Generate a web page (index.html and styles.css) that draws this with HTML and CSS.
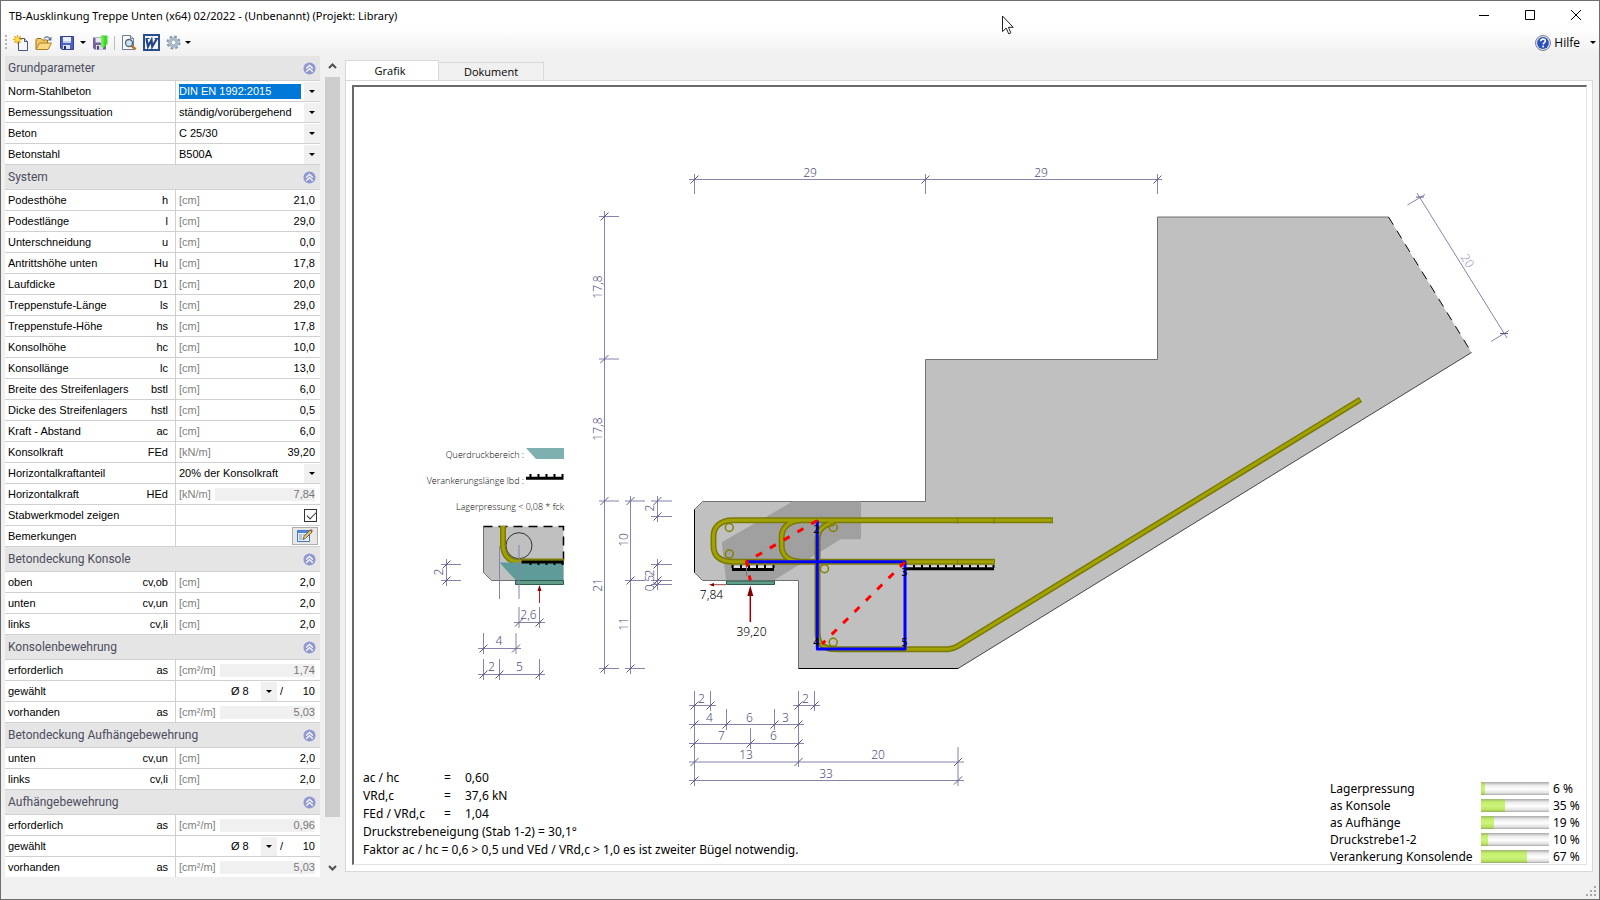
FILE: index.html
```
<!DOCTYPE html>
<html lang="de">
<head>
  <meta charset="UTF-8" />
  <meta name="viewport" content="width=device-width, initial-scale=1.0" />
  <title>TB-Ausklinkung Treppe Unten</title>
  <link rel="stylesheet" href="styles.css">
</head>
<body>
  <header class="titlebar">
    <h1>TB-Ausklinkung Treppe Unten (x64) 02/2022 - (Unbenannt) (Projekt: Library)</h1>
    <div class="window-buttons">
      <button type="button" aria-label="Minimieren"><svg width="12" height="12" viewBox="0 0 12 12"><path d="M1 6.5h10" /></svg></button>
      <button type="button" aria-label="Maximieren"><svg width="12" height="12" viewBox="0 0 12 12"><path d="M1.5 1.5h9v9h-9z" /></svg></button>
      <button type="button" aria-label="Schließen"><svg width="12" height="12" viewBox="0 0 12 12"><path d="M1 1l10 10M11 1L1 11" /></svg></button>
    </div>
    <svg class="pointer" width="13" height="20" viewBox="0 0 13 20"><path d="M1.5 1v15.5l3.7-3.4 2.5 5.7 2.2-1-2.5-5.5h4.800z" fill="#fff" stroke="#222" /></svg>
  </header>

  <nav class="toolbar">
    <span class="grip"></span>
    <button type="button" class="tool" aria-label="Neu">
      <svg width="16" height="16" viewBox="0 0 16 16"><path d="M5.500 3.500h6l3 3v9h-9z" fill="#f6f8fc" stroke="#44567a" /><path d="M11.500 3.500v3h3" fill="#cdd7e8" stroke="#44567a" /><path d="M4.500 0v9M0 4.500h9M1.300 1.300l6.400 6.400M7.700 1.300L1.300 7.700" stroke="#f2a413" stroke-width="1.300" /><circle cx="4.500" cy="4.500" r="2" fill="#ffe34d" /></svg>
    </button>
    <button type="button" class="tool" aria-label="Öffnen">
      <svg width="17" height="16" viewBox="0 0 17 16"><path d="M1 14V4.500l1-1h4l1.500 1.500h5v3" fill="#f3c768" stroke="#9a7020" /><path d="M1 14.500l3.500-6.500h12l-3.500 6.500z" fill="#fbd984" stroke="#b07f22" /><path d="M9 3.500c2-2.500 4.500-2 6 .5" fill="none" stroke="#5d7290" stroke-width="1.200" /><path d="M16.500 1.500v4h-4z" fill="#5d7290" /></svg>
    </button>
    <button type="button" class="tool" aria-label="Speichern">
      <svg width="16" height="16" viewBox="0 0 16 16"><path d="M1.500 1.500h13v13h-11.500l-1.500-1.500z" fill="#4f5fc4" stroke="#333d96" /><path d="M4 2h8v6H4z" fill="#eef2fb" /><path d="M4 6h8v2H4z" fill="#bccdf0" /><path d="M4 10h7v4H4z" fill="#dbe2f2" /><path d="M5 11h2v3H5z" fill="#222a60" /></svg>
    </button>
    <button type="button" class="drop" aria-label="Speicheroptionen"><i class="caret"></i></button>
    <button type="button" class="tool" aria-label="Speichern und schließen">
      <svg width="16" height="16" viewBox="0 0 16 16"><path d="M1 2.500h13v12H2.500L1 13z" fill="#75649f" /><path d="M3.500 3h6v4.500h-6z" fill="#e8e6f2" /><path d="M4 10h7v4.500H4z" fill="#dedbea" /><path d="M5 11h2v3.500H5z" fill="#4c3d76" /><path d="M9 .5h6.500V9L11 13 9 11z" fill="#3ddb2b" /><path d="M9 .5l2.500 1.500v11L9 11z" fill="#76ef52" /></svg>
    </button>
    <span class="separator"></span>
    <button type="button" class="tool" aria-label="Vorschau">
      <svg width="16" height="16" viewBox="0 0 16 16"><path d="M1.500 .5h8l3 3v11h-11z" fill="#f7f9fc" stroke="#6d7d98" /><path d="M9.500 .5v3h3" fill="#dbe3ef" stroke="#6d7d98" /><path d="M10.500 10.500l4 4" stroke="#b3782c" stroke-width="2.500" /><circle cx="8" cy="8" r="3.500" fill="#cfe4f6" stroke="#52637c" stroke-width="1.300" /></svg>
    </button>
    <button type="button" class="tool" aria-label="Word">
      <svg width="17" height="17" viewBox="0 0 17 17"><path d="M1 1h15v15H1z" fill="#f2f6fc" stroke="#2b4c8c" stroke-width="2" /><path d="M3.500 5l1.500 7.500L8.500 6l.7 6.500L14 4.500" fill="none" stroke="#234688" stroke-width="2.200" /><path d="M2.500 4.500h4M11.500 4.500H15" stroke="#234688" stroke-width="1.200" /></svg>
    </button>
    <button type="button" class="tool narrow" aria-label="Einstellungen">
      <svg width="15" height="15" viewBox="0 0 15 15"><circle cx="7.500" cy="7.500" r="5.800" fill="none" stroke="#8797a8" stroke-width="2.400" stroke-dasharray="2.600 1.955" /><circle cx="7.500" cy="7.500" r="4" fill="#f3f6f9" stroke="#a9bacb" stroke-width="2.600" /><circle cx="7.500" cy="7.500" r="2.400" fill="#fff" stroke="#8292a4" stroke-width=".8" /></svg>
    </button>
    <button type="button" class="drop" aria-label="Einstellungsoptionen"><i class="caret"></i></button>
    <button type="button" class="help">
      <svg width="16" height="16" viewBox="0 0 16 16"><circle cx="8" cy="8" r="7.500" fill="#dfe3ea" stroke="#7c818a" /><circle cx="8" cy="8" r="5.900" fill="#2b50bd" /><path d="M5.700 6.300c.1-3 4.800-2.800 4.700-.2 0 1.500-2.200 1.500-2.300 3.300" fill="none" stroke="#fff" stroke-width="1.600" /><circle cx="8.100" cy="11.600" r="1" fill="#fff" /></svg>
      Hilfe <i class="caret"></i>
    </button>
  </nav>

  <svg class="defs" width="0" height="0">
    <symbol id="fold" viewBox="0 0 14 14"><circle cx="7" cy="7" r="6.500" fill="#8f98d0" /><path d="M3.500 7L7 3.500 10.500 7M3.500 10.500L7 7l3.500 3.500" fill="none" stroke="#fff" stroke-width="1.300" /></symbol>
  </svg>

  <main>
    <form class="params">
      <section>
        <h2>Grundparameter <button type="button" class="fold" aria-label="Einklappen"><svg><use href="#fold" /></svg></button></h2>
        <div class="row"><label for="norm">Norm-Stahlbeton</label><div class="value combo"><select id="norm" class="selected"><option>DIN EN 1992:2015</option></select><i class="arrow"></i></div></div>
        <div class="row"><label for="situation">Bemessungssituation</label><div class="value combo"><select id="situation"><option>ständig/vorübergehend</option></select><i class="arrow"></i></div></div>
        <div class="row"><label for="beton">Beton</label><div class="value combo"><select id="beton"><option>C 25/30</option></select><i class="arrow"></i></div></div>
        <div class="row"><label for="stahl">Betonstahl</label><div class="value combo"><select id="stahl"><option>B500A</option></select><i class="arrow"></i></div></div>
      </section>

      <section>
        <h2>System <button type="button" class="fold" aria-label="Einklappen"><svg><use href="#fold" /></svg></button></h2>
        <div class="row"><label for="h">Podesthöhe <span>h</span></label><div class="value"><span class="unit">[cm]</span><input id="h" type="text" value="21,0"></div></div>
        <div class="row"><label for="l">Podestlänge <span>l</span></label><div class="value"><span class="unit">[cm]</span><input id="l" type="text" value="29,0"></div></div>
        <div class="row"><label for="u">Unterschneidung <span>u</span></label><div class="value"><span class="unit">[cm]</span><input id="u" type="text" value="0,0"></div></div>
        <div class="row"><label for="hu">Antrittshöhe unten <span>Hu</span></label><div class="value"><span class="unit">[cm]</span><input id="hu" type="text" value="17,8"></div></div>
        <div class="row"><label for="d1">Laufdicke <span>D1</span></label><div class="value"><span class="unit">[cm]</span><input id="d1" type="text" value="20,0"></div></div>
        <div class="row"><label for="ls">Treppenstufe-Länge <span>ls</span></label><div class="value"><span class="unit">[cm]</span><input id="ls" type="text" value="29,0"></div></div>
        <div class="row"><label for="hs">Treppenstufe-Höhe <span>hs</span></label><div class="value"><span class="unit">[cm]</span><input id="hs" type="text" value="17,8"></div></div>
        <div class="row"><label for="hc">Konsolhöhe <span>hc</span></label><div class="value"><span class="unit">[cm]</span><input id="hc" type="text" value="10,0"></div></div>
        <div class="row"><label for="lc">Konsollänge <span>lc</span></label><div class="value"><span class="unit">[cm]</span><input id="lc" type="text" value="13,0"></div></div>
        <div class="row"><label for="bstl">Breite des Streifenlagers <span>bstl</span></label><div class="value"><span class="unit">[cm]</span><input id="bstl" type="text" value="6,0"></div></div>
        <div class="row"><label for="hstl">Dicke des Streifenlagers <span>hstl</span></label><div class="value"><span class="unit">[cm]</span><input id="hstl" type="text" value="0,5"></div></div>
        <div class="row"><label for="ac">Kraft - Abstand <span>ac</span></label><div class="value"><span class="unit">[cm]</span><input id="ac" type="text" value="6,0"></div></div>
        <div class="row"><label for="fed">Konsolkraft <span>FEd</span></label><div class="value"><span class="unit">[kN/m]</span><input id="fed" type="text" value="39,20"></div></div>
        <div class="row"><label for="hanteil">Horizontalkraftanteil</label><div class="value combo"><select id="hanteil"><option>20% der Konsolkraft</option></select><i class="arrow"></i></div></div>
        <div class="row"><label for="hed">Horizontalkraft <span>HEd</span></label><div class="value"><span class="unit">[kN/m]</span><input id="hed" type="text" value="7,84" readonly></div></div>
        <div class="row"><label for="stabwerk">Stabwerkmodel zeigen</label><div class="value end"><input id="stabwerk" type="checkbox" checked></div></div>
        <div class="row"><label for="bemerkungen">Bemerkungen</label><div class="value end">
          <button type="button" id="bemerkungen" class="note" aria-label="Bemerkungen">
            <svg width="16" height="14" viewBox="0 0 16 14"><path d="M.5 1.500h12v11H.5z" fill="#e9f0fb" stroke="#4a72b8" /><path d="M.5 1.500h12V4H.5z" fill="#4f86d8" /><path d="M2 6h3M2 8h3M2 10h3M6 6h4" stroke="#7b98c9" /><path d="M6 10.500l1-3L13 1l2 2-6.500 6.500z" fill="#e8c66a" stroke="#54452a" stroke-width=".8" /><path d="M13 1l1-1 2 2-1 1z" fill="#c9433a" /></svg>
          </button></div></div>
      </section>

      <section>
        <h2>Betondeckung Konsole <button type="button" class="fold" aria-label="Einklappen"><svg><use href="#fold" /></svg></button></h2>
        <div class="row"><label for="cvob">oben <span>cv,ob</span></label><div class="value"><span class="unit">[cm]</span><input id="cvob" type="text" value="2,0"></div></div>
        <div class="row"><label for="cvun">unten <span>cv,un</span></label><div class="value"><span class="unit">[cm]</span><input id="cvun" type="text" value="2,0"></div></div>
        <div class="row"><label for="cvli">links <span>cv,li</span></label><div class="value"><span class="unit">[cm]</span><input id="cvli" type="text" value="2,0"></div></div>
      </section>

      <section>
        <h2>Konsolenbewehrung <button type="button" class="fold" aria-label="Einklappen"><svg><use href="#fold" /></svg></button></h2>
        <div class="row"><label for="kas1">erforderlich <span>as</span></label><div class="value"><span class="unit">[cm²/m]</span><input id="kas1" type="text" value="1,74" readonly></div></div>
        <div class="row"><label for="kdm">gewählt</label><div class="value combo bars"><select id="kdm"><option>Ø 8</option></select><i class="arrow"></i><span>/</span><input type="text" aria-label="Abstand" value="10"></div></div>
        <div class="row"><label for="kas2">vorhanden <span>as</span></label><div class="value"><span class="unit">[cm²/m]</span><input id="kas2" type="text" value="5,03" readonly></div></div>
      </section>

      <section>
        <h2>Betondeckung Aufhängebewehrung <button type="button" class="fold" aria-label="Einklappen"><svg><use href="#fold" /></svg></button></h2>
        <div class="row"><label for="acvun">unten <span>cv,un</span></label><div class="value"><span class="unit">[cm]</span><input id="acvun" type="text" value="2,0"></div></div>
        <div class="row"><label for="acvli">links <span>cv,li</span></label><div class="value"><span class="unit">[cm]</span><input id="acvli" type="text" value="2,0"></div></div>
      </section>

      <section>
        <h2>Aufhängebewehrung <button type="button" class="fold" aria-label="Einklappen"><svg><use href="#fold" /></svg></button></h2>
        <div class="row"><label for="aas1">erforderlich <span>as</span></label><div class="value"><span class="unit">[cm²/m]</span><input id="aas1" type="text" value="0,96" readonly></div></div>
        <div class="row"><label for="adm">gewählt</label><div class="value combo bars"><select id="adm"><option>Ø 8</option></select><i class="arrow"></i><span>/</span><input type="text" aria-label="Abstand" value="10"></div></div>
        <div class="row"><label for="aas2">vorhanden <span>as</span></label><div class="value"><span class="unit">[cm²/m]</span><input id="aas2" type="text" value="5,03" readonly></div></div>
      </section>
    </form>

    <div class="scrollbar">
      <button type="button" class="up" aria-label="Nach oben"><svg width="9" height="6" viewBox="0 0 9 6"><path d="M1 5l3.500-3.500L8 5" /></svg></button>
      <div class="track"><div class="thumb"></div></div>
      <button type="button" aria-label="Nach unten"><svg width="9" height="6" viewBox="0 0 9 6"><path d="M1 1l3.500 3.500L8 1" /></svg></button>
    </div>

    <div class="view">
      <div class="tabs" role="tablist">
        <button type="button" role="tab" class="active" aria-selected="true">Grafik</button>
        <button type="button" role="tab" aria-selected="false">Dokument</button>
      </div>
      <div class="page">
        <div class="canvas">
          <svg class="drawing" viewBox="354 87 1232 777">
            <defs>
              <path id="t" d="M-4 4L4-4" />
            </defs>

            <!-- Beton -->
            <path class="concrete" d="M702.500 501.500H925.500V359.500H1157.500V217H1388.500L1471.500 352.500 958 668.500H798.500V580.500H702.500L694.500 572.500V509.500Z" />
            <path class="outline" d="M1388.500 217H1157.500V359.500H925.500V501.500H702.500L694.500 509.500V572.500L702.500 580.500H798.500V668.500" />
            <path class="edge" d="M694.500 509.500V572.500M798.500 668.500H958" />
            <path class="edge thin" d="M958 668.500L1471.500 352.500" />
            <path class="cut" d="M1388.500 217L1471.500 352.500" />

            <!-- Druckbereich -->
            <path class="strut-area" d="M721.700 542.300L792.700 501.500H861V539.300H840.700L773.500 580.500H726Z" />

            <!-- Bewehrung -->
            <g class="bar-edge">
              <path d="M1053 520.200H733C719 520.200 713.500 528 713.500 536V546C713.500 555 719 561.700 733 561.700H995" />
              <path d="M800 520.200C788 521 781.700 529 781.700 536V546C781.700 554 787 561 800 561.700" />
              <path d="M834 523C824 524 817.500 530 817.500 540V632C817.500 643 822 649.200 836 649.200H948Q954 648.500 958 646L1360.500 399.500" />
            </g>
            <g class="bar">
              <path d="M1052 520.200H733C719 520.200 713.500 528 713.500 536V546C713.500 555 719 561.700 733 561.700H994" />
              <path d="M800 520.200C788 521 781.700 529 781.700 536V546C781.700 554 787 561 800 561.700" />
              <path d="M834 523C824 524 817.500 530 817.500 540V632C817.500 643 822 649.200 836 649.200H948Q954 648.500 958 646L1359.500 400" />
            </g>
            <path class="bar-joint" d="M957.500 517.500v6M994 517.500v6M957.500 559v6" />
            <g class="bar-dot">
              <circle cx="729.300" cy="527.500" r="4" /><circle cx="729.300" cy="554" r="4" /><circle cx="833.200" cy="527.500" r="4" /><circle cx="824.500" cy="568.700" r="4" /><circle cx="833.200" cy="642.300" r="4" />
            </g>

            <!-- Verankerung -->
            <path class="gap" d="M734 567H774M905 567H994" />
            <path class="comb" d="M732 569.500H774M905 568.700H994" />
            <path class="teeth" d="M732.500 568v-3M741 568v-3M749 568v-3M757 568v-3M765 568v-3M773.500 568v-3M914 568v-3M922 568v-3M930 568v-3M938 568v-3M946 568v-3M954 568v-3M962 568v-3M970 568v-3M978 568v-3M986 568v-3M993.500 568v-3" />
            <path d="M746.500 565v11" stroke="#777" />

            <path class="plate" d="M726.500 581H774.500V584.500H726.500Z" />

            <!-- Stabwerk -->
            <path class="tie" d="M746.500 561.700H905V649H817.300V520.500M905 561.700" />
            <path class="strut" d="M817.300 520.500L746.500 561.700L750.300 580.500M905 562L822 644" />
            <g class="node">
              <text x="816.500" y="533">2</text><text x="904.500" y="576">3</text><text x="816.500" y="646">4</text><text x="904.500" y="646">5</text>
            </g>

            <!-- Lasten -->
            <path d="M750.300 622V594" stroke="#a00000" stroke-width="1.500" />
            <path d="M750.300 585.500l3 10.500h-6z" fill="#800000" />
            <path d="M726 584.700H712" stroke="#a04040" />
            <path d="M709 584.700l5-1.700v3.400z" fill="#800000" />
            <text class="force" x="711.500" y="599">7,84</text>
            <text class="force" x="751.500" y="636">39,20</text>

            <!-- Legende und Detail Auflager -->
            <g class="legend">
              <text x="524" y="458">Querdruckbereich :</text>
              <text x="524" y="484">Verankerungslänge lbd :</text>
              <text x="564" y="510">Lagerpressung &lt; 0,08 * fck</text>
            </g>
            <path d="M526 448H564V459H536Z" fill="#7fb0b0" />
            <path class="comb" d="M526 478.200H563.500" />
            <path class="teeth" d="M530.500 477v-3M538.500 477v-3M546.500 477v-3M554.500 477v-3M562.500 477v-3" />

            <path class="concrete" d="M483.500 526.500H563.500V580.500H491.500L483.500 572.500Z" />
            <path class="outline" d="M483.500 526.500V572.500L491.500 580.500H516" />
            <path class="cut-heavy" d="M483.500 526.500H563.500V562" />
            <circle cx="519" cy="545.700" r="13" fill="none" stroke="#333" />
            <path class="bar-edge" d="M503 526V544C503 555 509 561.500 518 561.500H564" />
            <path class="bar" d="M503 526V544C503 555 509 561.500 518 561.500H563" />
            <path d="M499.500 562.500H563.500V581H516.500Z" fill="#5f9c99" />
            <path class="comb" d="M521.500 562H563.500" />
            <path class="teeth" d="M530.500 562v3M538.500 562v3M546.500 562v3M554.500 562v3M562.500 562v3" />
            <path class="plate" d="M515.500 580.500H563.500V584.500H515.500Z" />
            <path d="M539.500 603V590" stroke="#b02020" />
            <path d="M539.500 585l2 6h-4z" fill="#800000" />

            <!-- Maßlinien -->
            <g class="dim">
              <path d="M499.500 546V599M519 545V599" />
              <path d="M519 607V628M539.500 607V628M514 622.500H545" />
              <path d="M483.500 633V654M516 633V654M478 648.500H521" />
              <path d="M483.500 659V680M499.500 659V680M539.500 659V680M478 674.500H545" />
              <path d="M446.500 559V586M441 564.500H461M441 580.500H461" />
              <path d="M604.500 211V674M599 216.500H619M599 359H619M599 501H619M599 668.500H619" />
              <path d="M630.500 496V674M625 501H645M625 580.500H645M625 668.500H645" />
              <path d="M657.500 496V522M651 501H672M651 516.500H672M657.500 559V590M651 564.500H672M651 580.500H672M651 584.500H672" />
              <path d="M689 179.500H1162M694.500 174V194M925.500 174V194M1157.500 174V194" />
              <path d="M694.500 691V786M798.500 691V767M710.500 691V711M814.500 691V711M689 705.500H716M793 705.500H820" />
              <path d="M689 724.500H804M726.500 709V730M774.500 709V730" />
              <path d="M689 743.500H804M750.500 728V749" />
              <path d="M689 762H964M958 747V786" />
              <path d="M689 780.500H964" />
              <path d="M1417 193L1507 338M1407.500 205L1425 194.500M1491 341.500L1509 330.500" />
            </g>
            <g class="dim tick">
              <use href="#t" x="519" y="622.500" /><use href="#t" x="539.500" y="622.500" />
              <use href="#t" x="483.500" y="648.500" /><use href="#t" x="516" y="648.500" />
              <use href="#t" x="483.500" y="674.500" /><use href="#t" x="499.500" y="674.500" /><use href="#t" x="539.500" y="674.500" />
              <use href="#t" x="446.500" y="564.500" /><use href="#t" x="446.500" y="580.500" />
              <use href="#t" x="604.500" y="216.500" /><use href="#t" x="604.500" y="359" /><use href="#t" x="604.500" y="501" /><use href="#t" x="604.500" y="668.500" />
              <use href="#t" x="630.500" y="501" /><use href="#t" x="630.500" y="580.500" /><use href="#t" x="630.500" y="668.500" />
              <use href="#t" x="657.500" y="501" /><use href="#t" x="657.500" y="516.500" /><use href="#t" x="657.500" y="564.500" /><use href="#t" x="657.500" y="580.500" /><use href="#t" x="657.500" y="584.500" />
              <use href="#t" x="694.500" y="179.500" /><use href="#t" x="925.500" y="179.500" /><use href="#t" x="1157.500" y="179.500" />
              <use href="#t" x="694.500" y="705.500" /><use href="#t" x="710.500" y="705.500" /><use href="#t" x="798.500" y="705.500" /><use href="#t" x="814.500" y="705.500" />
              <use href="#t" x="694.500" y="724.500" /><use href="#t" x="726.500" y="724.500" /><use href="#t" x="774.500" y="724.500" /><use href="#t" x="798.500" y="724.500" />
              <use href="#t" x="694.500" y="743.500" /><use href="#t" x="750.500" y="743.500" /><use href="#t" x="798.500" y="743.500" />
              <use href="#t" x="694.500" y="762" /><use href="#t" x="798.500" y="762" /><use href="#t" x="958" y="762" />
              <use href="#t" x="694.500" y="780.500" /><use href="#t" x="958" y="780.500" />
              <path d="M1416 197H1424M1500 333.500H1508" />
            </g>
            <g class="dim-text">
              <text x="810" y="177">29</text><text x="1041" y="177">29</text>
              <text x="528.500" y="619">2,6</text><text x="499" y="645">4</text><text x="491.500" y="671">2</text><text x="519.500" y="671">5</text>
              <text x="701.500" y="703">2</text><text x="805.500" y="703">2</text>
              <text x="709.500" y="722">4</text><text x="749.500" y="722">6</text><text x="785.500" y="722">3</text>
              <text x="721.500" y="740">7</text><text x="773.500" y="740">6</text>
              <text x="746" y="759">13</text><text x="878" y="759">20</text><text x="826" y="778">33</text>
              <text transform="translate(443 572) rotate(-90)">2</text>
              <text transform="translate(602 287) rotate(-90)">17,8</text>
              <text transform="translate(602 429) rotate(-90)">17,8</text>
              <text transform="translate(602 585) rotate(-90)">21</text>
              <text transform="translate(628 540) rotate(-90)">10</text>
              <text transform="translate(628 624) rotate(-90)">11</text>
              <text transform="translate(654 508) rotate(-90)">2</text>
              <text transform="translate(654 573) rotate(-90)">2</text>
              <text transform="translate(654 583) rotate(-90)">0,5</text>
              <text class="faint" transform="translate(1464 263) rotate(58)">20</text>
            </g>
          </svg>

          <div class="results">
            <p class="eq"><span>ac / hc</span><span>=</span><span>0,60</span></p>
            <p class="eq"><span>VRd,c</span><span>=</span><span>37,6 kN</span></p>
            <p class="eq"><span>FEd / VRd,c</span><span>=</span><span>1,04</span></p>
            <p>Druckstrebeneigung (Stab 1-2) = 30,1°</p>
            <p>Faktor ac / hc = 0,6 &gt; 0,5 und VEd / VRd,c &gt; 1,0 es ist zweiter Bügel notwendig.</p>
          </div>

          <div class="usage">
            <p><span>Lagerpressung</span><span class="meter"><i style="width: 6%"></i></span><span>6 %</span></p>
            <p><span>as Konsole</span><span class="meter"><i style="width: 35%"></i></span><span>35 %</span></p>
            <p><span>as Aufhänge</span><span class="meter"><i style="width: 19%"></i></span><span>19 %</span></p>
            <p><span>Druckstrebe1-2</span><span class="meter"><i style="width: 10%"></i></span><span>10 %</span></p>
            <p><span>Verankerung Konsolende</span><span class="meter"><i style="width: 67%"></i></span><span>67 %</span></p>
          </div>
        </div>
      </div>
    </div>
  </main>

  <footer class="statusbar">
    <svg width="11" height="11" viewBox="0 0 11 11"><path d="M8 0h2v2H8zM4 4h2v2H4zM8 4h2v2H8zM0 8h2v2H0zM4 8h2v2H4zM8 8h2v2H8z" fill="#a6a6a6" /></svg>
  </footer>
</body>
</html>
```
FILE: styles.css
```
* {
  box-sizing: border-box;
}

body {
  display: flex;
  flex-direction: column;
  height: 100vh;
  margin: 0;
  border: 1px solid #6e6e6e;
  background: #f0f0f0;
  color: #000;
  font: 12px "Open Sans", "Noto Sans", sans-serif;
  overflow: hidden;
}

button {
  padding: 0;
  border: 0;
  background: none;
  color: inherit;
  font: inherit;
}

h1, h2, p {
  margin: 0;
  font-weight: normal;
}

.defs {
  position: absolute;
}

/* title bar */
.titlebar {
  position: relative;
  display: flex;
  flex: none;
  align-items: center;
  justify-content: space-between;
  height: 30px;
  padding: 0 0 2px 8px;
  background: #fff;
}

.titlebar h1 {
  font: 11px "Noto Sans", sans-serif;
}

.window-buttons {
  display: flex;
}

.window-buttons button {
  display: flex;
  align-items: center;
  justify-content: center;
  width: 46px;
  height: 28px;
}

.window-buttons path {
  fill: none;
  stroke: #000;
}

.pointer {
  position: absolute;
  left: 1000px;
  top: 14px;
}

/* toolbar */
.toolbar {
  display: flex;
  flex: none;
  align-items: center;
  height: 25px;
  padding: 0 0 2px 4px;
  background: linear-gradient(#fdfdfd, #f0f0f0);
}

.grip {
  width: 2px;
  height: 16px;
  margin-right: 2px;
  background: repeating-linear-gradient(#b5b5b5 0 2px, transparent 2px 4px);
}

.tool {
  display: flex;
  align-items: center;
  justify-content: center;
  width: 23px;
  height: 22px;
}

.narrow {
  width: 20px;
}

.drop {
  width: 10px;
  height: 22px;
}

.caret {
  display: block;
  width: 6px;
  margin: auto;
  border: 3px solid transparent;
  border-top-color: #000;
  border-bottom: 0;
}

.separator {
  width: 1px;
  height: 14px;
  margin: 0 2px 0 3px;
  background: #bdbdbd;
}

.help {
  display: flex;
  align-items: center;
  gap: 3px;
  margin-left: auto;
  padding-right: 3px;
}

.help .caret {
  margin-left: 7px;
}

main {
  display: flex;
  flex: 1;
  min-height: 0;
}

/* parameter panel */
.params {
  flex: none;
  width: 315px;
  margin-left: 4px;
  background: #fff;
  font: 11px "Liberation Sans", Arial, sans-serif;
  overflow: hidden;
}

.params h2 {
  display: flex;
  align-items: center;
  justify-content: space-between;
  height: 25px;
  padding: 0 4px 0 3px;
  border-bottom: 1px solid #d0d0d0;
  background: #e5e5e5;
  color: #4c4c60;
  font: 12px Roboto, "Open Sans", sans-serif;
}

.fold, .fold svg {
  display: block;
  width: 13px;
  height: 13px;
}

.row {
  display: grid;
  grid-template-columns: 170px 1fr;
  height: 21px;
  border-bottom: 1px solid #d0d0d0;
}

.row label {
  display: flex;
  justify-content: space-between;
  padding: 0 7px 0 3px;
  line-height: 20px;
}

.value {
  display: flex;
  align-items: center;
  min-width: 0;
  padding: 0 5px 0 3px;
  border-left: 1px solid #d0d0d0;
}

.value input, .value select {
  flex: 1;
  width: 0;
  min-width: 0;
  height: 15px;
  margin: 0;
  padding: 0;
  border: 0;
  background: none;
  color: #000;
  font: inherit;
  appearance: none;
}

.value input {
  text-align: right;
}

.value input[readonly] {
  height: 13px;
  margin-left: 4px;
  background: #f0f0f0;
  color: #777;
}

.unit {
  color: #808080;
}

.combo {
  padding-right: 0;
}

.value select.selected {
  background: #0078d7;
  color: #fff;
}

.arrow {
  display: flex;
  align-items: center;
  justify-content: center;
  width: 16px;
  height: 19px;
  margin-left: 3px;
  background: #f0f0f0;
}

.arrow::after {
  content: "";
  border: 3px solid transparent;
  border-top-color: #000;
  border-bottom: 0;
}

.bars {
  padding-right: 5px;
}

.bars select {
  flex: none;
  width: 27px;
  margin-left: 52px;
}

.bars span {
  padding-left: 3px;
}

.end {
  justify-content: flex-end;
  padding-right: 2px;
}

.value input[type="checkbox"] {
  flex: none;
  width: 13px;
  height: 13px;
  margin-right: 1px;
  border: 1px solid #333;
  background: #fff;
}

.value input[type="checkbox"]:checked::after {
  content: "";
  display: block;
  width: 8px;
  height: 4px;
  margin: 2px 0 0 2px;
  border: solid #333;
  border-width: 0 0 1px 1px;
  transform: rotate(-45deg);
}

.note {
  display: flex;
  align-items: center;
  justify-content: center;
  width: 26px;
  height: 18px;
  border: 1px solid #adadad;
  background: #e8e8e8;
}

/* scroll bar */
.scrollbar {
  display: flex;
  flex: none;
  flex-direction: column;
  width: 15px;
  margin: 0 5px;
}

.scrollbar button {
  height: 21px;
}

.scrollbar .up {
  padding-bottom: 6px;
}

.scrollbar path {
  fill: none;
  stroke: #505050;
  stroke-width: 2;
}

.track {
  flex: 1;
}

.thumb {
  height: 95%;
  background: #cdcdcd;
}

/* tabs */
.view {
  display: flex;
  flex: 1;
  flex-direction: column;
  min-width: 0;
  padding: 4px 6px 5px 0;
}

.tabs {
  display: flex;
  align-items: flex-end;
  height: 20px;
  font-size: 11px;
}

.tabs button {
  width: 105px;
  height: 18px;
  border: 1px solid #d9d9d9;
  border-bottom: 0;
  border-left: 0;
}

.tabs .active {
  width: 94px;
  height: 21px;
  margin-bottom: -1px;
  padding: 0 4px 2px 0;
  border-left: 1px solid #d9d9d9;
  background: #fff;
}

.page {
  flex: 1;
  min-height: 0;
  padding: 4px 5px 6px 6px;
  border: 1px solid #d9d9d9;
  background: #fff;
}

.canvas {
  display: grid;
  grid-template: 100% / 100%;
  height: 100%;
  border: 1px solid #e3e3e3;
  border-top: 2px solid #696969;
  border-left: 2px solid #696969;
  font-family: "Noto Sans", "Open Sans", sans-serif;
}

.canvas > * {
  grid-area: 1 / 1;
}

.drawing {
  width: 100%;
  height: 100%;
}

.concrete {
  fill: #c0c0c0;
}

.outline {
  fill: none;
  stroke: #707070;
}

.edge {
  fill: none;
  stroke: #000;
}

.thin {
  stroke: #444;
}

.cut {
  stroke: #000;
  stroke-dasharray: 9 7;
}

.cut-heavy {
  fill: none;
  stroke: #000;
  stroke-width: 1.500;
  stroke-dasharray: 9 6;
}

.strut-area {
  fill: #a0a0a0;
}

.bar-edge, .bar {
  fill: none;
  stroke: #7a7a08;
  stroke-width: 6;
}

.bar {
  stroke: #a2a200;
  stroke-width: 3;
}

.bar-joint {
  stroke: #7a7a08;
}

.bar-dot {
  fill: none;
  stroke: #808000;
  stroke-width: 1.500;
}

.gap {
  stroke: #ddd;
  stroke-width: 3;
}

.comb {
  stroke: #000;
  stroke-width: 3;
}

.teeth {
  stroke: #000;
  stroke-width: 2;
}

.plate {
  fill: #5f9c88;
  stroke: #2f5a50;
}

.tie {
  fill: none;
  stroke: #0000ff;
  stroke-width: 3;
  stroke-linejoin: round;
}

.strut {
  fill: none;
  stroke: #ff0000;
  stroke-width: 3;
  stroke-dasharray: 7 9;
}

.drawing text {
  font-weight: 300;
  font-size: 12px;
  text-anchor: middle;
}

.drawing .node text {
  font-size: 11px;
  font-weight: 400;
}

.drawing .legend text {
  font-family: "Open Sans", sans-serif;
  font-size: 9px;
  text-anchor: end;
}

.dim {
  fill: none;
  stroke: #8484ac;
}

.tick {
  stroke: #5a5a8a;
}

.dim-text {
  fill: #50507c;
}

.faint {
  fill: #9a9abc;
}

/* text over the drawing */
.results {
  align-self: end;
  justify-self: start;
  padding: 0 0 5px 9px;
  font-weight: 300;
  line-height: 18px;
}

.eq {
  display: grid;
  grid-template-columns: 81px 21px auto;
}

.usage {
  align-self: end;
  justify-self: end;
  margin-bottom: -1px;
  font-weight: 300;
  line-height: 17px;
}

.usage p {
  display: grid;
  grid-template-columns: 151px 72px 33px;
  align-items: center;
}

.meter {
  width: 68px;
  height: 13px;
  background: linear-gradient(#a9a9a9, #ebebeb 25%, #fff 55%, #e0e0e0 85%, #a9a9a9);
}

.meter i {
  display: block;
  height: 100%;
  background: linear-gradient(#9fb86c, #c3ee6a 25%, #cdf57c 55%, #b9e25e 85%, #93ab60);
}

.statusbar {
  display: flex;
  flex: none;
  align-items: flex-end;
  justify-content: flex-end;
  height: 22px;
  padding: 0 2px 2px;
}
```
